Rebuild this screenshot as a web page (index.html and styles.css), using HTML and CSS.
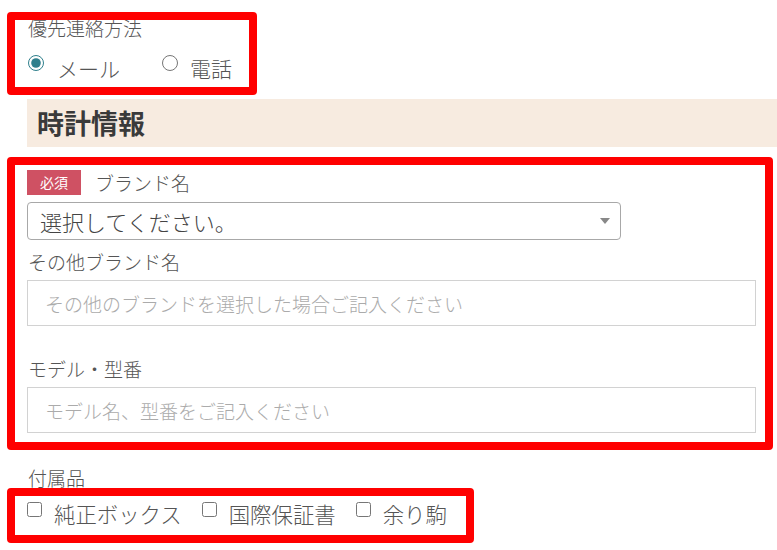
FILE: index.html
```html
<!DOCTYPE html>
<html lang="ja">
<head>
<meta charset="utf-8">
<title>時計情報フォーム</title>
<link rel="stylesheet" href="styles.css">
</head>
<body>
<div class="page">
  <section class="contact">
    <div class="field-label">優先連絡方法</div>
    <div class="choice-row">
      <label class="choice"><input type="radio" name="contact" checked><span>メール</span></label>
      <label class="choice choice-tel"><input type="radio" name="contact"><span>電話</span></label>
    </div>
  </section>

  <h2 class="band">時計情報</h2>

  <section class="watch">
    <div class="req-row"><span class="badge">必須</span><span class="req-label">ブランド名</span></div>
    <div class="select">
      <span class="select-text">選択してください。</span>
      <span class="caret"></span>
    </div>
    <div class="field-label label-other">その他ブランド名</div>
    <input class="text-input" type="text" placeholder="その他のブランドを選択した場合ご記入ください">
    <div class="field-label label-model">モデル・型番</div>
    <input class="text-input" type="text" placeholder="モデル名、型番をご記入ください">
  </section>

  <section class="accessories">
    <div class="field-label">付属品</div>
    <div class="check-row">
      <label class="check"><input type="checkbox"><span>純正ボックス</span></label>
      <label class="check"><input type="checkbox"><span>国際保証書</span></label>
      <label class="check"><input type="checkbox"><span>余り駒</span></label>
    </div>
  </section>

  <div class="mark mark-contact"></div>
  <div class="mark mark-watch"></div>
  <div class="mark mark-acc"></div>
</div>
</body>
</html>
```

FILE: styles.css
```css
* { box-sizing: border-box; }
html, body { margin: 0; padding: 0; background: #fff; }
body {
  font-family: "Noto Sans CJK JP", "Noto Sans", sans-serif;
  font-weight: 300;
  color: #555;
  width: 777px;
  height: 550px;
  overflow: hidden;
}
.page {
  position: relative;
  padding: 14px 0 0 27px;
}
.field-label {
  font-size: 19px;
  line-height: 28px;
  padding-left: 1px;
}
.choice-row {
  display: flex;
  align-items: center;
  height: 34px;
  margin-top: 9px;
}
.choice, .check {
  display: flex;
  align-items: center;
  font-size: 21px;
  line-height: 30px;
}
.check { font-size: 21.4px; }
.choice input, .check input {
  margin: 0;
  width: 15px;
  height: 15px;
  accent-color: #2f7f8c;
  position: relative;
  top: -5px;
}
.choice input { margin-left: 1px; width: 16px; height: 16px; }
.choice span { margin-left: 13px; }
.choice-tel { margin-left: 41px; }
.choice-tel span { margin-left: 12px; }

.band {
  margin: 14px 0 0 0;
  height: 48px;
  background: #f7ebe0;
  color: #3a3a3a;
  font-size: 27px;
  font-weight: 700;
  line-height: 48px;
  padding-left: 10px;
}

.watch { padding-right: 21px; margin-top: 22px; }
.req-row {
  display: flex;
  align-items: center;
  height: 27px;
}
.badge {
  display: inline-block;
  width: 54px;
  height: 25px;
  background: #cf5163;
  color: #fff;
  font-size: 14px;
  font-weight: 400;
  line-height: 25px;
  text-align: center;
}
.req-label {
  font-size: 19px;
  margin-left: 14px;
}
.select {
  display: flex;
  align-items: center;
  justify-content: space-between;
  width: 594px;
  height: 38px;
  margin-top: 6px;
  border: 1px solid #a8a8a8;
  border-radius: 4px;
  padding: 0 10px 0 12px;
}
.select-text {
  font-size: 22px;
  color: #444;
}
.caret {
  width: 0;
  height: 0;
  border-left: 5px solid transparent;
  border-right: 5px solid transparent;
  border-top: 6px solid #888;
}
.label-other { margin-top: 8px; }
.label-model { margin-top: 29px; }
.text-input {
  display: block;
  width: 100%;
  height: 46px;
  margin: 4px 0 0 0;
  border: 1px solid #d2d2d2;
  border-radius: 0;
  padding: 0 17px;
  font-family: inherit;
  font-weight: 300;
  font-size: 19px;
  color: #555;
  outline: none;
}
.text-input::placeholder { color: #ababab; }

.accessories { margin-top: 31px; }
.check-row {
  display: flex;
  align-items: center;
  height: 36px;
  margin-top: 4px;
}
.check input { border-radius: 3px; }
.check span { margin-left: 12px; margin-right: 20px; }

.mark {
  position: absolute;
  border: 8px solid #ff0000;
  border-radius: 4px;
  pointer-events: none;
}
.mark-contact { left: 7px; top: 12px; width: 250px; height: 83px; }
.mark-watch { left: 7px; top: 157px; width: 766px; height: 293px; }
.mark-acc { left: 7px; top: 488px; width: 467px; height: 55px; }
```
